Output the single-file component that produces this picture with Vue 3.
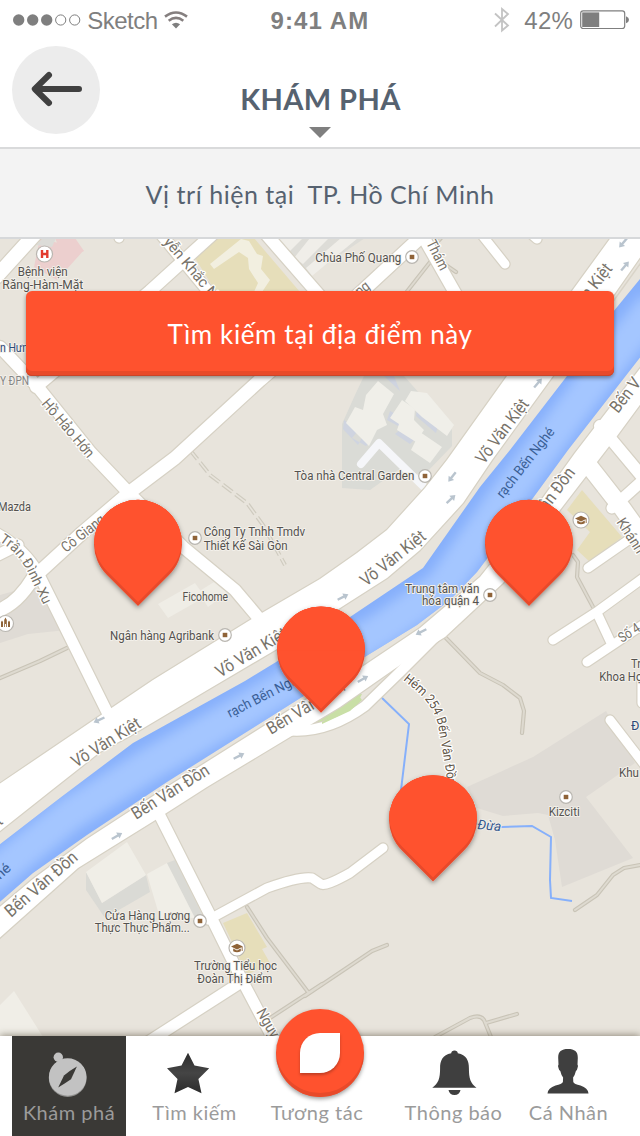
<script setup>
const minorRoads = [
  'M441,238 L428,252 M434,257 L405,294 M434,257 L456,272',
  'M445,637 L480,673 L503,685 L520,698 L524,711 L522,733',
  'M573,555 L578,562 L577,577 L593,607',
  'M575,910 L597,895 L613,875 L624,868 L640,865',
  'M305,996 L372,951 L387,945',
  'M435,1037 L470,1018 Q480,1014 484,1020 L491,1037 M486,1023 L517,1014',
  'M247,907 L267,938 L308,992 M270,1018 L322,984',
  'M0,678 L40,661 L67,648',
]

const roads = [
  { d: 'M-4,277 L36,233', w: 14 },
  { d: 'M-6,612 Q16,606 33,578 L82,533 L130,492 L175,458 L260,380 L357,296 L424,234', w: 13 },
  { d: 'M0,347 L37,386 L91,453 L128,492 L183,547 L235,590 L262,622', w: 12 },
  { d: 'M36,387 L150,291 L214,233', w: 12 },
  { d: 'M-6,532 Q24,548 38,573 L60,617 L108,714', w: 11 },
  { d: 'M-4,556 L18,545', w: 11 },
  { d: 'M160,233 L212,296', w: 11 },
  { d: 'M265,233 L320,296', w: 12 },
  { d: 'M421,233 L458,298', w: 12 },
  { d: 'M478,230 L505,264', w: 9 },
  { d: 'M530,233 L537,239', w: 9 },
  { d: 'M118,233 L119,238', w: 9 },
  { d: 'M586,462 L622,508 L650,547', w: 17 },
  { d: 'M600,426 L650,486', w: 12 },
  { d: 'M612,508 L650,474', w: 11 },
  { d: 'M588,568 L650,525', w: 9 },
  { d: 'M553,640 L598,611 L650,573', w: 9 },
  { d: 'M587,662 L650,620 M597,613 L612,645', w: 9 },
  { d: 'M642,678 L642,703', w: 9 },
  { d: 'M610,720 L650,772', w: 9 },
  { d: 'M158,812 L209,913 L243,982 L279,1050', w: 11 },
  { d: 'M208,920 L267,888 Q300,876 312,878 L321,884 Q325,887 350,873 L383,848', w: 9 },
  { d: 'M148,1042 L246,979', w: 11 },
  { d: 'M450,622 L400,672 L365,706 Q325,735 285,730', w: 10 },
]

const highways = [
  'M-5,787 L110,709 L153,680 L255,617 L320,579 L357,553 L387,530 L425,488 L447,460 L507,376 L572,291 L612,236 L655,236 L613,296 L553,376 L492,460 L463,503 L420,550 L387,578 L340,608 L277,649 L204,692 L130,736 L100,752 L53,789 L-5,835 Z',
  'M-5,911 L33,879 L87,839 L167,787 L302,702 L365,665 L420,628 L480,577 L537,506 L575,453 L645,362 L645,398 L617,436 L580,484 L560,510 L503,583 L445,637 L403,663 L340,707 L290,737 L207,787 L157,819 L78,868 L-5,942 Z',
]

const pois = [
  [412, 257], [425, 476], [195, 538], [225, 635], [490, 595], [566, 797], [200, 921],
]
const schools = [[581, 520], [237, 948]]

const arrows = [
  [99, 720, 155], [239, 756, -27], [117, 836, -30], [452, 477, 128], [451, 499, -43],
  [343, 597, -27], [421, 632, 153], [363, 679, -30], [538, 383, -50], [623, 243, 130], [625, 266, -50],
]

// text, x, baseline, width
const placeLabels = [
  ['Bệnh viện', 17.7, 276, 50], ['Răng-Hàm-Mặt', 2.3, 289, 81],
  ['Mazda', -2, 511, 33],
  ['Công Ty Tnhh Tmdv', 203.7, 536, 101.5], ['Thiết Kế Sài Gòn', 203.7, 549.5, 84],
  ['Ficohome', 182.5, 601, 45.5], ['Ngân hàng Agribank', 110, 639.5, 104],
  ['Chùa Phố Quang', 315.3, 261.5, 86], ['Tòa nhà Central Garden', 294.3, 480, 120],
  ['Trung tâm văn', 405.3, 592.5, 74], ['hóa quận 4', 422, 605, 57],
  ['Tr', 631, 668, 10], ['Khoa Họ', 599.3, 681, 43], ['Khu', 619, 776.5, 20],
  ['Kizciti', 548.7, 815.5, 31], ['Cửa Hàng Lương', 104.7, 919.5, 85.5],
  ['Thực Thực Phẩm...', 94.7, 932, 95], ['Trường Tiểu học', 194, 970, 83],
  ['Đoàn Thị Điểm', 197.3, 983, 75],
]

// text, x, baseline, width, angle, size
const roadLabels = [
  ['Võ Văn Kiệt', 76, 768, 78, -32, 17.5], ['Võ Văn Kiệt', 220, 678, 80, -31, 17.5],
  ['Võ Văn Kiệt', 366, 587, 78, -38.5, 17.5], ['Võ Văn Kiệt', 484, 465, 76, -53, 17.5],
  ['Võ Văn Kiệt', 564, 332, 80, -52, 17.5], ['t', 0, 826, 5, -39, 17.5],
  ['Bến Vân Đồn', 11, 918, 90, -41, 17.5], ['Bến Vân Đồn', 136, 820, 88, -32, 17.5],
  ['Bến Vân Đồn', 271, 735, 88, -31, 17.5], ['Bến Vân Đồn', 523, 543, 88, -53, 17.5],
  ['Bến V', 618, 414, 39, -52, 17.5],
  ['Hồ Hảo Hớn', 41, 404, 72, 49.5, 15], ['yễn Khắc Nhu', 163, 242, 92, 50, 15],
  ['Cô Giang', 66, 553, 51, -38, 15], ['Cô Giang', 330, 320, 52, -38, 15],
  ['Thám', 426, 243, 32, 63, 15], ['Khánh', 616, 522, 39, 57, 15],
  ['Số 4', 622, 643, 23, -33, 14], ['Nguy', 256, 1012, 31, 60, 15],
]

const pins = [[138, 544], [321, 650.7], [529, 544], [433, 819.5]]

const tabs = [
  { id: 'explore', label: 'Khám phá', box: '39 1046 60 50' },
  { id: 'search', label: 'Tìm kiếm', box: '164.5 1046 60 50' },
  { id: 'interact', label: 'Tương tác', box: '287 1046 60 50' },
  { id: 'alerts', label: 'Thông báo', box: '423.5 1046 60 50' },
  { id: 'profile', label: 'Cá Nhân', box: '538.5 1046 60 50' },
]
</script>

<template>
  <div class="screen">
    <div class="status">
      <div class="carrier">
        <svg width="68" height="14" viewBox="0 0 68 14">
          <g fill="#7f7f7f">
            <circle cx="5.7" cy="7" r="5.7" /><circle cx="19.7" cy="7" r="5.7" /><circle cx="33.7" cy="7" r="5.7" />
          </g>
          <g fill="none" stroke="#7f7f7f">
            <circle cx="47.7" cy="7" r="5.1" /><circle cx="61.7" cy="7" r="5.1" />
          </g>
        </svg>
        <span class="network">Sketch</span>
        <svg width="24" height="18" viewBox="0 0 24 18">
          <g fill="none" stroke="#857f7f" stroke-width="2.6">
            <path d="M1,5.6 Q12,-2.6 23,5.6" /><path d="M4.7,9.7 Q12,4.2 19.3,9.7" />
          </g>
          <path d="M7.9,13.3 Q12,10 16.1,13.3 L12,17.4 Z" fill="#7f7f7f" />
        </svg>
      </div>
      <div class="clock">9:41 AM</div>
      <div class="power">
        <svg width="16" height="26" viewBox="0 0 16 26">
          <path d="M1,6.5 L14,18.5 L8,23.5 L8,2 L14,7 L1,19.5" fill="none" stroke="#c3c3c3" stroke-width="1.8" />
        </svg>
        <span class="percent">42%</span>
        <svg width="50" height="20" viewBox="0 0 50 20">
          <rect x=".7" y=".9" width="44" height="17.6" rx="2.5" fill="none" stroke="#7f7f7f" stroke-width="1.2" />
          <rect x="2.2" y="2.4" width="17" height="14.6" fill="#7f7f7f" />
          <path d="M46,6.2 Q49,7.5 49,9.7 Q49,12 46,13.2 Z" fill="#7f7f7f" />
        </svg>
      </div>
    </div>

    <header class="header">
      <button class="back" aria-label="back">
        <svg width="88" height="88" viewBox="12 46 88 88">
          <path d="M49,75 L34.8,89 L49,103 M35,89 H79" fill="none" stroke="#404040" stroke-width="6" stroke-linecap="round" stroke-linejoin="round" />
        </svg>
      </button>
      <h1 class="title">KHÁM PHÁ</h1>
      <svg class="caret" width="22" height="11" viewBox="0 0 22 11"><path d="M0,0 H22 L11,11 Z" fill="#7f7f7f" /></svg>
    </header>

    <div class="location"><span>{{ 'Vị trí hiện tại  TP. Hồ Chí Minh' }}</span></div>

    <main class="map">
      <svg class="canvas" width="640" height="798" viewBox="0 238 640 798">
        <defs>
          <clipPath id="pinClip"><path d="M0,62 L-31,31 A44,44 0 1 1 31,31 Z" /></clipPath>
          <clipPath id="waterClip">
            <path d="M-5,848 L60,798 L133,743 L245,681 L350,617 L423,568 L480,487 L510,450 L567,376 L613,312 L645,273 L645,351 L568,450 L533,498 L477,572 L450,600 L417,625 L363,658 L302,697 L167,782 L87,835 L33,873 L-5,906 Z" />
          </clipPath>
          <filter id="soft" x="-20%" y="-20%" width="140%" height="150%"><feGaussianBlur stdDeviation="6" /></filter>
          <filter id="shadow" x="-20%" y="-20%" width="140%" height="140%">
            <feDropShadow dx="0" dy="2" stdDeviation="2.4" flood-color="#000" flood-opacity=".4" />
          </filter>
          <path id="hem" d="M403,680 L413,688 Q432,703 438,724 L445,765 L451,810" />
          <path id="tran" d="M-1,541 L9,548 Q22,559 29,575 L44,606" />
        </defs>

        <rect x="0" y="238" width="640" height="798" fill="#e8e4dc" />

        <!-- land use -->
        <g fill="#dfdbd5">
          <path d="M0,595 L32,586 L50,596 L67,630 L28,634 L0,643 Z" />
          <path d="M467,787 L533,757 L606,711 L635,763 L586,797 L633,858 L562,887 L555,840 L548,815 L538,813 L503,816 L477,808 Z" />
        </g>
        <path d="M40,238 L84,250 L57,280 L34,267 Z M55,238 L75,238 L84,251 L65,262 Z" fill="#eccfce" />
        <path d="M36,245 L43,238 L56,238 L52,247 Z" fill="#dcdcd8" />
        <path d="M195,258 L218,238 L254,238 L300,292 L216,292 Z" fill="#e6deba" />
        <path d="M210,264 L241,239 L249,241 L257,254 L263,256 L261,269 L270,280 L262,292 L254,292 L258,283 L249,269 L248,258 L239,252 L214,269 Z" fill="#f2efe0" />
        <path d="M272,238 H365 L300,282 Z" fill="#dddcd7" />
        <path d="M278,238 H303 L289,252 Z M310,238 H329 L303,264 L294,258 Z M341,238 H358 L312,276 L306,268 Z" fill="#f0eee9" />
        <path d="M582,490 L622,537 L590,562 L577,550 L590,532 L567,510 Z" fill="#e6deba" />
        <path d="M223,923 L247,913 L267,947 L262,949 L270,963 L247,975 L238,955 Z" fill="#e6deba" />

        <!-- building blocks -->
        <path d="M342,424 L355,395 L364,376 L404,376 L452,430 L452,446 L424,475 L398,470 L370,490 L342,488 Z" fill="#dadbd6" />
        <g fill="#cfd4e0">
          <path d="M344,420 L364,434 L358,445 L343,429 Z M352,438 L366,446 L372,440 L360,428 Z M384,376 L400,391 L394,376 Z" />
          <path d="M387,420 L400,427 L404,418 L390,411 Z M395,434 L410,444 L418,436 L402,428 Z M417,408 L438,426 L436,433 L416,416 Z M413,430 L434,448 L430,454 L411,438 Z" />
        </g>
        <g fill="#f0efe9">
          <path d="M378,381 L394,394 L383,414 L387,425 L377,430 L369,446 L346,423 L355,407 L363,410 L366,395 Z" />
          <path d="M402,400 L415,409 L414,420 L424,430 L416,442 L397,430 L399,424 L390,418 Z" />
          <path d="M411,391 L427,393 L454,425 L447,436 L422,417 L405,401 Z M420,432 L442,447 L430,463 L411,450 Z" />
        </g>
        <path d="M361,464 L379,443 L424,487" fill="none" stroke="#f5f6f9" stroke-width="8" stroke-linecap="round" stroke-linejoin="round" />
        <path d="M158,604 L195,583 L205,597 L168,618 Z M198,592 L214,582 L227,593 L208,607 Z" fill="#efede6" />
        <path d="M86,872 L102,903 L146,875 L150,892 L105,918 L86,890 Z" fill="#dadad5" />
        <path d="M86,872 L127,842 L146,875 L102,903 Z M147,874 L167,863 L196,918 L160,918 Z M-2,1007 L14,991 L43,1037 L-2,1037 Z" fill="#f0eee7" />
        <path d="M167,863 L175,860 L204,918 L195,918 Z" fill="#dadad5" />
        <path d="M190,450 L210,475 L247,503 L263,525 L285,565" fill="none" stroke="#cfcbbf" stroke-width="4" stroke-dasharray="12 4" />
        <path d="M190,450 L210,475 L247,503 L263,525 L285,565" fill="none" stroke="#e8e4dc" stroke-width="1.6" />

        <!-- streams -->
        <g fill="none" stroke="#86b0fb" stroke-width="2">
          <path d="M380,696 L409,724 L401,790" /><path d="M470,823 L502,827 L532,826 L551,837 L550,880 L551,898 L572,901" />
        </g>

        <!-- roads -->
        <g fill="none" stroke="#c9c4b7" stroke-width="4.2" stroke-linecap="round" stroke-linejoin="round">
          <path v-for="(d, i) in minorRoads" :key="i" :d="d" />
        </g>
        <g fill="none" stroke="#dedad0" stroke-width="2" stroke-linecap="round" stroke-linejoin="round">
          <path v-for="(d, i) in minorRoads" :key="i" :d="d" />
        </g>
        <path d="M270,745 L345,695 L362,694 L356,706 L322,724 L288,738 Z" fill="#c9dfa6" />
        <g fill="none" stroke="#d6d1c4" stroke-linecap="round" stroke-linejoin="round">
          <path v-for="(r, i) in roads" :key="i" :d="r.d" :stroke-width="r.w + 2.4" />
          <path v-for="(d, i) in highways" :key="'h' + i" :d="d" stroke-width="2.4" />
        </g>
        <g fill="none" stroke="#fff" stroke-linecap="round" stroke-linejoin="round">
          <path v-for="(r, i) in roads" :key="i" :d="r.d" :stroke-width="r.w" />
        </g>
        <path v-for="(d, i) in highways" :key="i" :d="d" fill="#fff" />
        <path d="M612,303 L645,257" stroke="#d9d4c8" stroke-width="1.5" />
        <path d="M322,722 L340,712 L359,696 L362,700 L350,711 L322,724 Z" fill="#c9dfa6" />

        <!-- river -->
        <g clip-path="url(#waterClip)">
          <rect x="0" y="238" width="640" height="700" fill="#86affb" />
          <path d="M-15,882 L70,814 L150,764 L250,707 L385,627 L442,587 L502,502 L590,386 L655,305" fill="none" stroke="#a4c6ff" stroke-width="34" filter="url(#soft)" />
        </g>

        <g fill="none" stroke="#b9c4ce">
          <g v-for="(a, i) in arrows" :key="i" :transform="`translate(${a[0]},${a[1]}) rotate(${a[2]})`">
            <path d="M-6,0 H2" stroke-width="2.4" /><path d="M1,-3.5 L6,0 L1,3.5 Z" fill="#b9c4ce" stroke="none" />
          </g>
        </g>

        <!-- labels -->
        <g class="road-text">
          <text v-for="(l, i) in roadLabels" :key="i" :transform="`translate(${l[1]},${l[2]}) rotate(${l[4]})`" :textLength="l[3]" lengthAdjust="spacingAndGlyphs" :font-size="l[5]">{{ l[0] }}</text>
          <text font-size="14"><textPath href="#tran">Trần Đình Xu</textPath></text>
          <text class="lane" font-size="13"><textPath href="#hem" textLength="120" lengthAdjust="spacingAndGlyphs">Hém 254 Bến Vân Đồn</textPath></text>
        </g>
        <g class="water-text">
          <text transform="translate(230,718) rotate(-27)" textLength="84" lengthAdjust="spacingAndGlyphs">rạch Bến Nghé</text>
          <text transform="translate(503,499) rotate(-52)" textLength="85" lengthAdjust="spacingAndGlyphs">rạch Bến Nghé</text>
          <text transform="translate(0,880) rotate(-42)" textLength="16" lengthAdjust="spacingAndGlyphs">hé</text>
        </g>
        <text class="stream-text" transform="translate(477,829) rotate(5)" textLength="24">Đừa</text>
        <g class="place-text">
          <text v-for="l in placeLabels" :key="l[0]" :x="l[1]" :y="l[2]" :textLength="l[3]" lengthAdjust="spacingAndGlyphs">{{ l[0] }}</text>
          <text class="muted" x="0" y="384.5" textLength="29" lengthAdjust="spacingAndGlyphs">Y ĐPN</text>
          <text class="transit" x="0" y="351.5" textLength="34" lengthAdjust="spacingAndGlyphs">n Hưng</text>
          <text class="transit" x="631" y="730">Đ</text>
        </g>

        <!-- points of interest -->
        <g v-for="(p, i) in pois" :key="i" :transform="`translate(${p[0]},${p[1]})`">
          <circle r="6.3" fill="#fff" stroke="#b9b6b0" stroke-width="1.2" />
          <rect x="-2.3" y="-2.2" width="4.6" height="4.4" fill="#8f6338" />
        </g>
        <g v-for="(p, i) in schools" :key="'s' + i" :transform="`translate(${p[0]},${p[1]})`">
          <circle r="8" fill="#fff" stroke="#b9b6b0" stroke-width="1.2" />
          <path d="M-6,-1.5 L0,-4.2 L6,-1.5 L0,1.4 Z M-3.8,.6 L0,2.4 L3.8,.6 V3.2 Q0,5.4 -3.8,3.2 Z M4.7,-1 H5.6 V3 H4.7 Z" fill="#8f6338" />
        </g>
        <circle cx="44.5" cy="254" r="8" fill="#fff" stroke="#b9b6b0" stroke-width="1.2" />
        <path d="M42,250 V258 M47.3,250 V258 M42,254 H47.3" stroke="#e23b2e" stroke-width="2.4" />
        <circle cx="5.5" cy="623.5" r="8" fill="#fff" stroke="#b9b6b0" stroke-width="1.2" />
        <path d="M1,622 L2,620.5 L3,622 V627 H1 Z M4.2,620 L5.5,617.5 L6.8,620 V627 H6 V624 H5 V627 H4.2 Z M8,622 L9,620.5 L10,622 V627 H8 Z" fill="#8f6338" />

        <!-- pins -->
        <g v-for="(p, i) in pins" :key="'p' + i" :transform="`translate(${p[0]},${p[1]})`">
          <path d="M0,62 L-31,31 A44,44 0 1 1 31,31 Z" fill="#e84a2a" filter="url(#shadow)" />
          <g clip-path="url(#pinClip)" fill="#ff522e">
            <path d="M0,58 L-31,27 A44,44 0 1 1 31,27 Z" />
            <rect x="-44" y="-44" width="88" height="44" />
          </g>
        </g>
      </svg>
      <button class="search-here"><span>Tìm kiếm tại địa điểm này</span></button>
    </main>

    <nav class="tabs">
      <div v-for="t in tabs" :key="t.id" class="tab" :class="t.id">
        <svg v-if="t.id !== 'interact'" class="icon" width="60" height="50" :viewBox="t.box">
          <g v-if="t.id === 'explore'">
            <circle cx="67.7" cy="1078" r="18.9" fill="#8e8e8c" />
            <circle cx="58.3" cy="1057.3" r="4.7" fill="#c2c2c2" /><circle cx="67.7" cy="1077" r="18.8" fill="#c2c2c2" />
            <path d="M76.9,1066.5 L71,1079.3 Q65,1083.5 58.2,1087.5 L64,1075.5 Q69,1071 76.9,1066.5 Z" fill="#3a3936" />
          </g>
          <g v-else-if="t.id === 'search'">
            <defs><linearGradient id="starFill" x1="0" y1="0" x2="0" y2="1"><stop offset="0" stop-color="#2c2c2c" /><stop offset=".5" stop-color="#454545" /><stop offset="1" stop-color="#2b2b2b" /></linearGradient></defs>
            <path d="M187.5,1052.7 L194,1065.5 L208.7,1068.3 L197.9,1079 L201,1093.3 L187.5,1087 L174,1093.3 L177,1079 L166.5,1068.3 L181,1065.5 Z" fill="url(#starFill)" />
          </g>
          <path v-else-if="t.id === 'alerts'" fill="#3f3f3f" d="M454,1050.6 Q457,1050.8 457.3,1053.3 C466,1055 468.5,1061 468.4,1068 C468.4,1079 470,1083 476,1087.8 H431.8 C438,1083 439.6,1079 439.6,1068 C439.5,1061 442,1055 450.7,1053.3 Q451,1050.8 454,1050.6 Z M448,1090 H460 Q459,1095 454,1095 Q449,1095 448,1090 Z" />
          <path v-else fill="#3f3f3f" d="M567.5,1049 C574,1049 577.5,1051.5 577.3,1058 L577,1064.5 Q578,1065.5 577,1068 Q576.6,1070.5 575.4,1071 Q574.5,1075 572.6,1077.5 L572.8,1082 Q573.5,1084 580,1085.5 Q587.5,1088 588,1093.4 H547 Q547.5,1088 555,1085.5 Q561.5,1084 562.4,1082 L562.6,1077.5 Q560.7,1075 559.8,1071 Q558.4,1070.5 558,1068 Q557,1065.5 558,1064.5 L557.7,1058 C557.5,1051.5 561,1049 567.5,1049 Z" />
        </svg>
        <div v-else class="fab"><i class="leaf" /></div>
        <span class="label">{{ t.label }}</span>
      </div>
    </nav>
  </div>
</template>

<style>
body { margin: 0; background: #fff; }
</style>

<style scoped>
.screen { width: 640px; height: 1136px; display: flex; flex-direction: column; overflow: hidden; background: #fff; font-family: Lato, "Noto Sans", sans-serif; }
svg { display: block; flex: none; }
button { border: 0; padding: 0; font: inherit; }
.status { height: 40px; display: grid; grid-template-columns: 1fr 1fr 1fr; align-items: center; font: 24px/28px "Liberation Sans", Arial, sans-serif; color: #7f7f7f; white-space: nowrap; }
.carrier { display: flex; align-items: center; padding-left: 12.7px; gap: 6.5px; }
.network { letter-spacing: -.5px; padding-top: 2px; }
.clock { text-align: center; font-weight: bold; letter-spacing: 1.1px; padding-top: 2px; }
.power { display: flex; align-items: center; justify-content: flex-end; padding-right: 10px; }
.percent { padding: 2px 7px 0 14px; letter-spacing: .2px; }
.header { position: relative; box-sizing: border-box; height: 107px; display: flex; flex-direction: column; align-items: center; }
.back { position: absolute; left: 12px; top: 6px; width: 88px; height: 88px; border-radius: 50%; background: #ececec; }
.title { margin: 40px 0 0; height: 47px; font-size: 29px; line-height: 38px; font-weight: 700; color: #566270; letter-spacing: .4px; padding-left: 1px; }
.location { box-sizing: border-box; height: 92px; padding-top: 2px; flex: none; border-top: 2px solid #d9dadb; border-bottom: 2px solid #d6d8da; background: #f3f3f3; display: flex; justify-content: center; align-items: center; font-size: 25px; color: #566270; white-space: pre; letter-spacing: .54px; }
.map { position: relative; height: 797px; flex: none; display: flex; align-items: flex-start; justify-content: center; overflow: hidden; }
.canvas { width: 640px; height: 798px; margin-top: -1px; }
.search-here { position: absolute; left: 26px; top: 52px; width: 588px; height: 85px; border-radius: 6px; background: #ff522e; box-shadow: inset 0 -1px #c9452a, inset 0 -5px #e84a2a, 0 2px 4px rgba(0, 0, 0, .4); color: #fff; font-size: 26px; letter-spacing: .6px; }
.tabs { position: relative; height: 100px; flex: none; display: grid; grid-template-columns: 114px 137px 108px 165px 65px; padding-left: 12px; background: #fff; box-shadow: 0 -1px 7px rgba(60, 50, 30, .5); }
.tab { display: flex; flex-direction: column; align-items: center; padding-top: 10px; height: 90px; white-space: nowrap; }
.icon { overflow: visible; }
.explore { background: #3a3936; }
.label { margin-top: 4px; font-size: 20px; line-height: 24px; letter-spacing: .5px; color: #9b9b9b; }
.fab { box-sizing: border-box; width: 88px; height: 88px; margin: -37px 0 -1px 6px; flex: none; border-radius: 50%; background: #ff522e; box-shadow: inset 0 -4px #e84a2a, 0 2px 4px rgba(0, 0, 0, .4); display: flex; padding: 24px; }
.leaf { width: 40px; height: 40px; border-radius: 20px 0 20px 0; background: #fff; box-shadow: 0 2px 3px rgba(0, 0, 0, .25); }
.road-text, .water-text, .place-text, .stream-text { font-family: Roboto, "Noto Sans", sans-serif; paint-order: stroke; stroke-linejoin: round; }
.road-text { fill: #78736a; stroke: #fff; stroke-width: 2.5px; }
.lane { fill: #5f5547; }
.water-text { fill: #3a5f96; font-size: 14px; stroke: #a3c5ff; stroke-width: 1.5px; }
.stream-text { fill: #34598f; font-size: 13.5px; font-style: italic; stroke: #f1eee8; stroke-width: 2px; }
.place-text { fill: #54524f; font-size: 12.5px; stroke: #f3f0ea; stroke-width: 2px; }
.muted { fill: #858585; }
.transit { fill: #2e4a78; }
</style>
